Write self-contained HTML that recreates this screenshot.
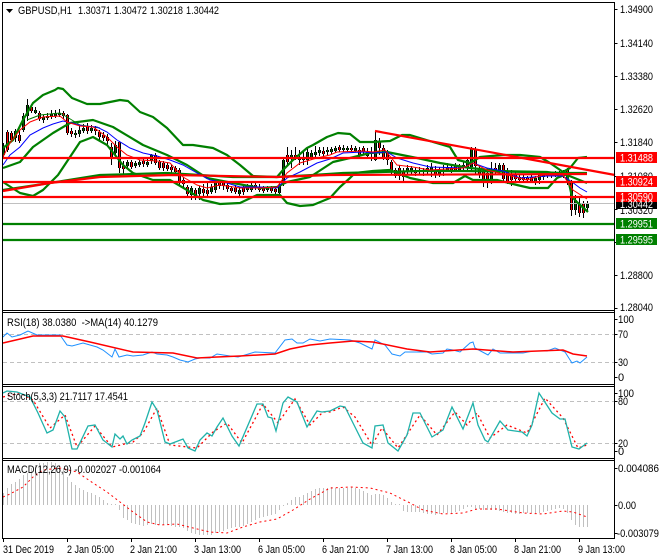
<!DOCTYPE html>
<html><head><meta charset="utf-8"><title>GBPUSD,H1</title>
<style>
html,body{margin:0;padding:0;background:#fff;width:660px;height:560px;overflow:hidden}
svg{display:block}
text{font-family:"Liberation Sans",sans-serif;font-size:11px;fill:#000}
.g{fill:none;stroke:#008000;stroke-width:2.2;stroke-linejoin:round}
.r{fill:none;stroke:#f00;stroke-width:2.2}
.gr{fill:none;stroke:#c0c0c0;stroke-width:1;stroke-dasharray:4 3}
.w{fill:#fff}
</style></head><body>
<svg width="660" height="560" viewBox="0 0 660 560" xmlns="http://www.w3.org/2000/svg">
<rect width="660" height="560" fill="#fff"/>
<defs>
<path id="dn" fill="none" d="M7.5 132V150M11.5 133V140M19.5 135V141M31.5 107V111M39.5 113V119M63.5 113V116M67.5 115V133M71.5 131V134M87.5 127V131M95.5 129V131M99.5 132V137M103.5 135V138M107.5 137V141M111.5 147V157M119.5 142V168M123.5 166V169M131.5 162V167M143.5 161V164M155.5 155V163M159.5 162V168M163.5 163V168M167.5 165V169M171.5 167V170M175.5 168V172M179.5 170V182M183.5 180V184M187.5 187V194M195.5 190V196M203.5 189V193M207.5 190V194M219.5 183V186M223.5 183V186M227.5 185V189M231.5 188V191M235.5 188V192M243.5 188V192M255.5 185V188M259.5 187V190M263.5 188V191M271.5 188V191M275.5 189V192M287.5 155V162M295.5 155V159M323.5 151V154M339.5 147V150M351.5 148V150M359.5 150V155M363.5 148V152M379.5 142V148M383.5 148V158M387.5 153V160M391.5 162V172M395.5 170V176M399.5 168V176M403.5 172V177M415.5 170V173M423.5 170V172M435.5 172V175M451.5 168V171M455.5 166V170M475.5 149V166M479.5 170V174M483.5 172V180M487.5 173V180M495.5 168V172M503.5 165V179M507.5 172V181M511.5 174V180M515.5 175V179M519.5 177V180M523.5 177V180M527.5 178V180M531.5 177V181M547.5 173V176M555.5 173V175M563.5 174V176M567.5 170V180M571.5 182V210M579.5 204V213M583.5 204V213"/>
<path id="up" fill="none" d="M3.5 147V155M15.5 131V138M23.5 116V130M27.5 105V116M35.5 110V113M43.5 117V120M47.5 116V118M51.5 114V117M55.5 113V116M59.5 113V115M75.5 133V135M79.5 130V134M83.5 128V131M91.5 128V131M115.5 145V153M127.5 162V166M135.5 163V166M139.5 162V165M147.5 162V165M151.5 155V161M191.5 188V195M199.5 188V194M211.5 187V192M215.5 182V190M239.5 190V194M247.5 187V190M251.5 185V190M267.5 188V190M279.5 185V193M283.5 160V183M291.5 155V158M299.5 157V160M303.5 157V160M307.5 152V160M311.5 153V157M315.5 152V155M319.5 150V153M327.5 150V152M331.5 149V152M335.5 148V151M343.5 148V150M347.5 148V150M355.5 148V151M367.5 152V156M375.5 140V160M407.5 168V172M411.5 168V171M419.5 170V172M427.5 168V172M431.5 167V171M439.5 170V174M443.5 170V172M447.5 167V170M459.5 167V170M463.5 165V168M467.5 160V167M471.5 149V167M491.5 170V181M499.5 165V170M535.5 178V181M539.5 175V180M543.5 174V177M551.5 174V176M559.5 173V175M575.5 200V210M587.5 203V208"/>
</defs>

<!-- main chart candle wicks -->
<path fill="none" stroke="#000" stroke-width="1" d="M3.5 143V157M7.5 130V152M11.5 131V142M15.5 129V142M19.5 130V143M23.5 113V132M27.5 99V121M31.5 104V113M35.5 107V114M39.5 111V121M43.5 115V123M47.5 113V120M51.5 110V119M55.5 110V118M59.5 109V117M63.5 111V119M67.5 114V135M71.5 128V137M75.5 130V138M79.5 126V137M83.5 124V133M87.5 123V134M91.5 125V133M95.5 126V135M99.5 130V140M103.5 132V141M107.5 134V145M111.5 143V165M115.5 141V156M119.5 141V173M123.5 161V175M127.5 160V169M131.5 160V169M135.5 161V168M139.5 160V167M143.5 158V167M147.5 159V167M151.5 154V164M155.5 153V165M159.5 160V170M163.5 161V171M167.5 163V171M171.5 165V173M175.5 166V175M179.5 168V186M183.5 177V189M187.5 185V198M191.5 186V200M195.5 188V200M199.5 186V200M203.5 184V197M207.5 183V196M211.5 184V194M215.5 179V193M219.5 180V189M223.5 181V190M227.5 182V192M231.5 186V193M235.5 185V194M239.5 187V196M243.5 185V195M247.5 184V192M251.5 183V192M255.5 183V190M259.5 184V192M263.5 186V193M267.5 186V192M271.5 186V193M275.5 187V194M279.5 181V195M283.5 158V186M287.5 147V165M291.5 150V168M295.5 147V160M299.5 150V165M303.5 150V165M307.5 148V165M311.5 150V160M315.5 146V158M319.5 147V156M323.5 147V157M327.5 147V155M331.5 147V154M335.5 146V153M339.5 145V152M343.5 145V152M347.5 146V152M351.5 145V152M355.5 146V152M359.5 147V157M363.5 146V154M367.5 148V158M371.5 147V161M375.5 131V161M379.5 138V155M383.5 145V160M387.5 150V165M391.5 160V175M395.5 168V178M399.5 165V180M403.5 168V181M407.5 165V175M411.5 166V174M415.5 167V176M419.5 167V175M423.5 168V176M427.5 165V174M431.5 163V177M435.5 166V178M439.5 167V177M443.5 165V176M447.5 163V172M451.5 164V173M455.5 163V172M459.5 164V172M463.5 162V171M467.5 158V170M471.5 147V172M475.5 147V175M479.5 165V178M483.5 168V187M487.5 168V188M491.5 162V184M495.5 163V175M499.5 163V173M503.5 163V183M507.5 168V184M511.5 170V186M515.5 172V182M519.5 174V183M523.5 175V183M527.5 176V182M531.5 175V183M535.5 176V185M539.5 172V184M543.5 172V180M547.5 171V178M551.5 172V178M555.5 171V177M559.5 171V177M563.5 170V178M567.5 168V185M571.5 180V216M575.5 195V215M579.5 198V217M583.5 201V218M587.5 201V211"/>
<use href="#dn" stroke="#000" stroke-width="3"/>
<use href="#up" stroke="#000" stroke-width="3"/>
<use href="#dn" stroke="#f00" stroke-width="1"/>
<use href="#up" stroke="#006000" stroke-width="1"/>

<!-- current price line -->
<line x1="3" y1="203.5" x2="614" y2="203.5" stroke="#c0c0c0"/>

<!-- bollinger bands -->
<polyline class="g" points="3,148 13,140 23,120 33,103 43,95 55,90 58,88 63,89 72,98 87,104 100,104 120,100 128,101 140,112 153,117 167,128 183,145 193,145 213,148 227,155 240,165 253,176 277,177 283,170 293,160 307,148 313,145 327,137 338,133 350,134 360,142 373,142 390,141 402,135 410,135 433,142 450,147 458,160 470,163 480,157 503,155 520,155 540,157 550,163 563,172 570,168 578,158 587,157"/>
<polyline class="g" points="3,168 20,162 33,147 53,133 70,123 93,120 113,127 143,145 167,155 187,165 207,178 233,183 260,188 277,187 287,182 310,177 333,162 350,158 370,153 387,152 417,158 440,163 470,168 500,171 547,172 567,175 587,183"/>
<polyline class="g" points="3,182 20,193 33,196 43,190 58,175 68,160 80,142 93,137 107,145 123,165 133,173 153,180 170,180 187,190 203,200 220,204 240,203 257,195 280,195 287,203 300,206 313,205 330,198 340,187 350,178 355,173 373,171 390,170 410,178 433,183 453,183 465,176 473,180 497,180 517,185 530,188 548,188 557,178 567,174 572,197 578,203 588,212"/>
<polyline class="g" style="stroke-width:1" points="27,120 40,115 60,113 67,117 80,125 100,128"/>
<polyline class="g" points="3,190 50,183 100,175 167,173 233,177 277,177 313,175 343,173 420,171 463,171 530,172 563,173 587,173"/>

<!-- moving averages -->
<polyline fill="none" stroke="#00f" points="3,165 10,155 20,147 30,135 43,128 53,124 63,121 72,123 83,126 97,127 107,132 117,140 130,148 143,153 157,156 170,160 183,165 197,173 210,180 227,183 240,187 260,187 277,188 287,178 300,172 317,163 330,159 343,153 363,152 373,153 387,152 397,158 413,163 430,167 463,168 473,163 487,168 503,171 520,178 533,177 547,176 563,176 572,182 580,188 587,192"/>
<polyline fill="none" stroke="#f00" points="3,157 10,143 20,130 30,122 43,117 60,116 67,122 80,126 93,127 107,137 117,147 127,155 140,160 157,161 170,163 183,177 197,185 207,188 220,185 240,188 260,188 277,187 287,173 300,163 317,158 330,155 337,152 363,151 373,152 385,150 397,165 413,167 430,170 463,168 473,163 487,170 507,175 527,180 543,175 563,175 573,190 587,199"/>

<!-- trend & levels -->
<polyline class="r" points="3,191 50,183 100,177 173,175 277,177 330,175 587,174"/>
<line class="r" x1="375" y1="131" x2="615" y2="175"/>
<line class="r" x1="3" y1="158" x2="614" y2="158"/>
<line class="r" x1="3" y1="182" x2="614" y2="182"/>
<line class="r" x1="3" y1="197" x2="614" y2="197"/>
<line x1="3" y1="224" x2="614" y2="224" stroke="#008000" stroke-width="2.2"/>
<line x1="3" y1="240" x2="614" y2="240" stroke="#008000" stroke-width="2.2"/>

<!-- RSI -->
<line class="gr" x1="3" y1="334.5" x2="614" y2="334.5"/>
<line class="gr" x1="3" y1="362.5" x2="614" y2="362.5"/>
<polyline fill="none" stroke="#1e90ff" points="3,337 7,333 12,337 20,335 28,331 37,335 60,335 67,345 72,346 83,343 97,347 103,350 112,357 115,349 119,357 127,355 133,356 143,355 152,352 157,354 167,355 173,357 180,360 188,362 195,359 200,358 210,358 217,354 230,356 238,357 245,355 255,352 275,353 285,340 292,339 297,343 303,343 310,339 320,341 330,339 350,340 360,343 372,349 375,340 385,345 392,354 400,356 405,352 427,352 432,354 443,353 447,349 453,350 460,352 470,343 473,342 475,348 488,355 493,349 500,353 523,353 533,351 547,351 555,348 565,352 572,363 577,361 580,363 587,357"/>
<polyline fill="none" stroke="#f00" stroke-width="1.5" points="3,343 33,336 63,336 90,342 133,352 173,353 197,358 217,357 240,356 275,354 290,349 310,345 330,343 353,341 373,342 407,349 430,352 473,349 513,352 563,350 573,354 587,356"/>

<!-- Stochastic -->
<line class="gr" x1="3" y1="401.5" x2="614" y2="401.5"/>
<line class="gr" x1="3" y1="443.5" x2="614" y2="443.5"/>
<polyline fill="none" stroke="#f00" stroke-width="1.3" stroke-dasharray="2 3" points="3,397 20,393 33,400 50,428 65,415 77,447 95,426 112,447 133,442 143,433 157,408 170,445 197,448 213,432 227,423 242,443 263,404 278,423 295,399 310,425 323,412 330,412 343,407 355,417 372,445 382,428 398,448 420,415 437,435 455,412 467,425 477,413 490,438 507,425 527,433 545,398 563,418 578,448 587,445"/>
<polyline fill="none" stroke="#20b2aa" stroke-width="1.3" points="3,393 7,391 17,392 30,397 38,413 47,433 53,430 60,411 65,417 72,449 77,449 88,426 95,425 103,440 112,447 115,434 120,439 123,436 127,444 132,440 140,436 145,423 152,402 157,410 165,442 170,444 183,439 188,448 195,451 200,440 207,433 212,436 217,427 223,418 232,436 239,446 257,404 263,404 268,417 272,418 276,431 283,403 288,397 297,402 307,427 317,411 322,412 330,411 340,406 345,407 353,423 363,443 372,448 375,426 383,425 388,443 398,451 407,435 413,413 420,413 432,437 443,430 452,407 463,429 473,403 478,425 485,440 488,442 500,421 508,430 522,432 527,436 532,425 539,393 552,413 560,419 565,419 572,447 579,449 587,443"/>

<!-- MACD -->
<path fill="none" stroke="#c0c0c0" d="M3.5 505V493M7.5 505V488M11.5 505V484M15.5 505V482M19.5 505V479M23.5 505V475M27.5 505V473M31.5 505V468M35.5 505V465M39.5 505V463M43.5 505V463M47.5 505V462M51.5 505V462M55.5 505V463M59.5 505V465M63.5 505V468M67.5 505V477M71.5 505V482M75.5 505V485M79.5 505V488M83.5 505V490M87.5 505V492M91.5 505V493M95.5 505V495M99.5 505V497M103.5 505V500M107.5 505V503M111.5 505V504M115.5 505V504M119.5 505V510M123.5 505V518M127.5 505V520M131.5 505V523M135.5 505V524M139.5 505V525M143.5 505V526M147.5 505V525M151.5 505V524M155.5 505V525M159.5 505V525M163.5 505V525M167.5 505V525M171.5 505V526M175.5 505V527M179.5 505V527M183.5 505V528M187.5 505V531M191.5 505V533M195.5 505V534M199.5 505V535M203.5 505V535M207.5 505V535M211.5 505V535M215.5 505V533M219.5 505V532M223.5 505V531M227.5 505V529M231.5 505V528M235.5 505V527M239.5 505V527M243.5 505V526M247.5 505V524M251.5 505V522M255.5 505V520M259.5 505V518M263.5 505V517M267.5 505V516M271.5 505V515M275.5 505V514M279.5 505V510M283.5 505V506M287.5 505V503M291.5 505V500M295.5 505V497M299.5 505V497M303.5 505V495M307.5 505V493M311.5 505V491M315.5 505V489M319.5 505V488M323.5 505V488M327.5 505V488M331.5 505V487M335.5 505V488M339.5 505V488M343.5 505V488M347.5 505V488M351.5 505V487M355.5 505V488M359.5 505V489M363.5 505V491M367.5 505V493M371.5 505V495M375.5 505V494M379.5 505V494M383.5 505V495M387.5 505V498M391.5 505V502M395.5 505V504M399.5 505V504M403.5 505V511M407.5 505V512M411.5 505V512M415.5 505V512M419.5 505V512M423.5 505V513M427.5 505V514M431.5 505V514M435.5 505V515M439.5 505V514M443.5 505V513M447.5 505V513M451.5 505V513M455.5 505V512M459.5 505V511M463.5 505V509M467.5 505V507M471.5 505V507M475.5 505V509M479.5 505V509M483.5 505V510M487.5 505V510M491.5 505V510M495.5 505V510M499.5 505V511M503.5 505V512M507.5 505V513M511.5 505V513M515.5 505V514M519.5 505V514M523.5 505V513M527.5 505V513M531.5 505V513M535.5 505V513M539.5 505V513M543.5 505V512M547.5 505V511M551.5 505V510M555.5 505V509M559.5 505V508M563.5 505V509M567.5 505V513M571.5 505V520M575.5 505V525M579.5 505V527M583.5 505V527M587.5 505V527"/>
<polyline fill="none" stroke="#f00" stroke-width="1" stroke-dasharray="2 3" points="3,497 10,494 23,487 33,477 43,470 60,468 77,472 93,483 107,492 120,502 133,512 147,522 160,525 177,524 193,528 210,532 227,533 243,527 260,522 277,519 293,510 310,499 323,492 330,488 350,487 370,488 390,493 410,503 423,510 443,514 463,513 477,509 497,509 523,513 543,514 563,511 573,512 587,517"/>

<!-- frames -->
<g fill="none" stroke="#000" stroke-width="1">
<path d="M2.5 311V2.5H614.5V538.5H2.5V311"/>
<path d="M2.5 310.5H614.5M2.5 312.5H614.5M2.5 384.5H614.5M2.5 386.5H614.5M2.5 458.5H614.5M2.5 460.5H614.5"/>
<path d="M614.5 9.5h3M614.5 43.5h3M614.5 76.5h3M614.5 109.5h3M614.5 142.5h3M614.5 176.5h3M614.5 209.5h3M614.5 242.5h3M614.5 275.5h3M614.5 308.5h3M614.5 319.5h3M614.5 334.5h3M614.5 362.5h3M614.5 377.5h3M614.5 393.5h3M614.5 401.5h3M614.5 443.5h3M614.5 451.5h3M614.5 468.5h3M614.5 505.5h3M614.5 533.5h3"/>
<path d="M3.5 538v4M67.5 538v4M131.5 538v4M195.5 538v4M259.5 538v4M323.5 538v4M387.5 538v4M451.5 538v4M515.5 538v4M579.5 538v4"/>
</g>

<!-- header -->
<path d="M6 9h7l-3.5 4z" fill="#000"/>
<text x="18" y="14" textLength="54" lengthAdjust="spacingAndGlyphs">GBPUSD,H1</text>
<text x="78" y="14" textLength="33" lengthAdjust="spacingAndGlyphs">1.30371</text>
<text x="114" y="14" textLength="33" lengthAdjust="spacingAndGlyphs">1.30472</text>
<text x="150" y="14" textLength="33" lengthAdjust="spacingAndGlyphs">1.30218</text>
<text x="186" y="14" textLength="33" lengthAdjust="spacingAndGlyphs">1.30442</text>

<!-- price axis -->
<text x="620" y="13" textLength="33" lengthAdjust="spacingAndGlyphs">1.34900</text>
<text x="620" y="47" textLength="33" lengthAdjust="spacingAndGlyphs">1.34140</text>
<text x="620" y="80" textLength="33" lengthAdjust="spacingAndGlyphs">1.33380</text>
<text x="620" y="113" textLength="33" lengthAdjust="spacingAndGlyphs">1.32620</text>
<text x="620" y="146" textLength="33" lengthAdjust="spacingAndGlyphs">1.31840</text>
<text x="620" y="180" textLength="33" lengthAdjust="spacingAndGlyphs">1.31080</text>
<text x="620" y="214" textLength="33" lengthAdjust="spacingAndGlyphs">1.30320</text>
<text x="620" y="279" textLength="33" lengthAdjust="spacingAndGlyphs">1.28800</text>
<text x="620" y="311" textLength="33" lengthAdjust="spacingAndGlyphs">1.28040</text>

<rect x="616" y="152" width="41" height="11" fill="#f00"/>
<text class="w" x="620" y="161.5" textLength="33" lengthAdjust="spacingAndGlyphs">1.31488</text>
<rect x="616" y="176" width="41" height="11" fill="#f00"/>
<text class="w" x="620" y="185.5" textLength="33" lengthAdjust="spacingAndGlyphs">1.30924</text>
<rect x="616" y="192" width="41" height="10" fill="#f00"/>
<text class="w" x="620" y="200.5" textLength="33" lengthAdjust="spacingAndGlyphs">1.30590</text>
<rect x="616" y="202" width="41" height="7" fill="#000"/>
<text class="w" x="620" y="208" textLength="33" lengthAdjust="spacingAndGlyphs">1.30442</text>
<rect x="616" y="218" width="41" height="11" fill="#008000"/>
<text class="w" x="620" y="227.5" textLength="33" lengthAdjust="spacingAndGlyphs">1.29951</text>
<rect x="616" y="234" width="41" height="11" fill="#008000"/>
<text class="w" x="620" y="243.5" textLength="33" lengthAdjust="spacingAndGlyphs">1.29595</text>

<!-- indicator axes -->
<text x="618" y="323" textLength="16" lengthAdjust="spacingAndGlyphs">100</text>
<text x="618" y="338" textLength="10" lengthAdjust="spacingAndGlyphs">70</text>
<text x="618" y="366" textLength="10" lengthAdjust="spacingAndGlyphs">30</text>
<text x="618" y="381">0</text>
<text x="618" y="397" textLength="16" lengthAdjust="spacingAndGlyphs">100</text>
<text x="618" y="405" textLength="10" lengthAdjust="spacingAndGlyphs">80</text>
<text x="618" y="447" textLength="10" lengthAdjust="spacingAndGlyphs">20</text>
<text x="618" y="455">0</text>
<text x="618" y="472" textLength="41" lengthAdjust="spacingAndGlyphs">0.004086</text>
<text x="618" y="509" textLength="18" lengthAdjust="spacingAndGlyphs">0.00</text>
<text x="617" y="537" textLength="42" lengthAdjust="spacingAndGlyphs">-0.003079</text>

<!-- indicator labels -->
<text x="7" y="326" textLength="151" lengthAdjust="spacingAndGlyphs" xml:space="preserve">RSI(18) 38.0380  -&gt;MA(14) 40.1279</text>
<text x="7" y="400" textLength="121" lengthAdjust="spacingAndGlyphs">Stoch(5,3,3) 21.7117 17.4541</text>
<text x="7" y="473" textLength="154" lengthAdjust="spacingAndGlyphs">MACD(12,26,9) -0.002027 -0.001064</text>

<!-- time axis -->
<text x="3" y="553" textLength="51" lengthAdjust="spacingAndGlyphs">31 Dec 2019</text>
<text x="67" y="553" textLength="47" lengthAdjust="spacingAndGlyphs">2 Jan 05:00</text>
<text x="130" y="553" textLength="47" lengthAdjust="spacingAndGlyphs">2 Jan 21:00</text>
<text x="194" y="553" textLength="47" lengthAdjust="spacingAndGlyphs">3 Jan 13:00</text>
<text x="258" y="553" textLength="47" lengthAdjust="spacingAndGlyphs">6 Jan 05:00</text>
<text x="322" y="553" textLength="47" lengthAdjust="spacingAndGlyphs">6 Jan 21:00</text>
<text x="386" y="553" textLength="47" lengthAdjust="spacingAndGlyphs">7 Jan 13:00</text>
<text x="450" y="553" textLength="47" lengthAdjust="spacingAndGlyphs">8 Jan 05:00</text>
<text x="514" y="553" textLength="47" lengthAdjust="spacingAndGlyphs">8 Jan 21:00</text>
<text x="578" y="553" textLength="47" lengthAdjust="spacingAndGlyphs">9 Jan 13:00</text>
</svg>
</body></html>
